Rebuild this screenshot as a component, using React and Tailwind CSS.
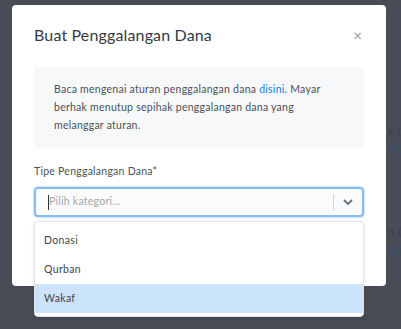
import React from 'react';

const options = ['Donasi', 'Qurban', 'Wakaf'];

const App = () => {
  return (
    <div className="relative w-[401px] h-[329px] bg-[#474c56] overflow-hidden font-['Lato','Liberation_Sans',sans-serif]">
      <div className="flex">
        {/* modal */}
        <div className="ml-[12px] mt-[5px] w-[374px] h-[281px] bg-white rounded-[4px] px-[22px] pt-[18px] shrink-0 relative">
          <div className="flex items-center justify-between">
            <h2 className="text-[16px] leading-[24px] text-[#363b44] tracking-[0.15px]">Buat Penggalangan Dana</h2>
            <span className="text-[#9a9ea5] text-[15px] leading-none mr-[2px]">×</span>
          </div>

          <div className="mt-[20px] bg-[#f7f8fa] rounded-[4px] px-[20px] pt-[13px] pb-[14px]">
            <p className="text-[10.5px] leading-[18px] text-[#4b5059] tracking-[0.25px]">
              Baca mengenai aturan penggalangan dana <span className="text-[#0a7cf2]">disini</span>. Mayar berhak menutup sepihak penggalangan dana yang melanggar aturan.
            </p>
          </div>

          <div className="mt-[14px] text-[10.5px] leading-[18px] text-[#4b5059] tracking-[0.25px]">Tipe Penggalangan Dana*</div>

          <div className="mt-[7px] h-[30px] flex items-center rounded-[4px] border-2 border-[#86bcf6] bg-[#f9fbfc] shadow-[0_0_0_1px_#d4e7fc]">
            <div className="flex-1 flex items-center pl-[12px]">
              <span className="w-px h-[15px] bg-[#333]"></span>
              <span className="text-[10.5px] text-[#a3a6ab] tracking-[0.25px]">Pilih kategori...</span>
            </div>
            <span className="w-px h-[16px] bg-[#cfd2d6]"></span>
            <div className="w-[28px] flex justify-center">
              <svg width="10" height="6" viewBox="0 0 10 6" fill="none">
                <path d="M1 1l4 4 4-4" stroke="#6b6f75" strokeWidth="1.8" />
              </svg>
            </div>
          </div>

          {/* dropdown menu */}
          <div className="absolute left-[22px] top-[216px] w-[330px] bg-white rounded-[4px] border border-[#e3e4e6] shadow-[0_2px_4px_rgba(0,0,0,0.12)] pt-[4px] pb-[3px] z-10">
            {options.map(opt => (
              <div
                key={opt}
                className={`h-[29px] flex items-center px-[9px] text-[10.5px] text-[#3f444c] tracking-[0.35px] ${opt === 'Wakaf' ? 'bg-[#cce4fb]' : ''}`}
              >
                {opt}
              </div>
            ))}
          </div>
        </div>

        {/* page behind overlay */}
        <div className="pl-[2px] whitespace-nowrap">
          <div className="h-[172px] border-b border-[#4b5059] pt-[125px]">
            <div className="text-[10px] leading-[12px] text-[#3a3f48]">a. (</div>
            <div className="text-[18px] leading-[20px] text-[#3e4e66]">rbb</div>
          </div>
          <div className="pt-[53px]">
            <div className="text-[10px] leading-[12px] text-[#3a3f48]">n. (</div>
            <div className="text-[18px] leading-[20px] text-[#3e4e66]">yr.i</div>
          </div>
        </div>
      </div>
    </div>
  );
};

export default App;
